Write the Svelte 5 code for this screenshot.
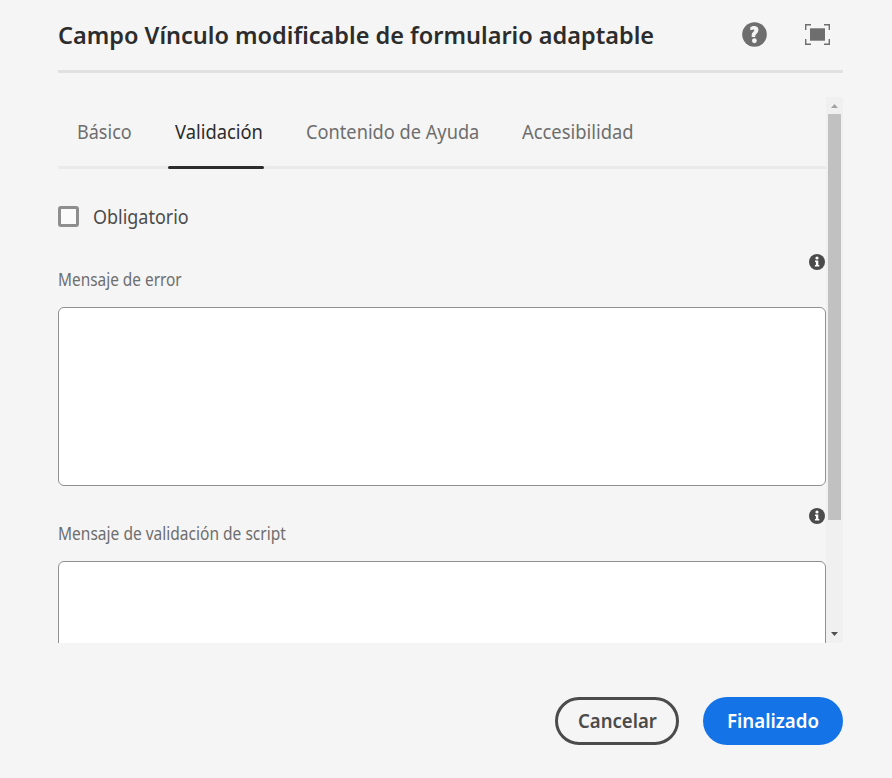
<script>
  const tabs = [
    { label: 'Básico', width: 55, gap: 19 },
    { label: 'Validación', width: 88, gap: 43, active: true },
    { label: 'Contenido de Ayuda', width: 173, gap: 43 },
    { label: 'Accesibilidad', width: 112, gap: 43 }
  ];
  const fields = [
    { label: 'Mensaje de error', width: 124 },
    { label: 'Mensaje de validación de script', width: 228 }
  ];

  // Condenses a line of text so that it spans the width of its box.
  function fit(node, width) {
    const apply = () => {
      node.style.transform = `scaleX(${width / node.offsetWidth})`;
    };
    apply();
    document.fonts.ready.then(apply);
  }
</script>

{#snippet line(text, width)}
  <span class="line" style="width:{width}px"><span class="glyphs" use:fit={width}>{text}</span></span>
{/snippet}

{#snippet info()}
  <svg class="info" width="16" height="16" viewBox="0 0 16 16" aria-hidden="true">
    <circle cx="8" cy="8" r="8" fill="#4b4b4b" />
    <circle cx="8" cy="4" r="1.6" fill="#fff" />
    <path d="M6 6.6h3.3v4.5h1v1.5H5.9v-1.5h1V8H6z" fill="#fff" />
  </svg>
{/snippet}

<div class="dialog">
  <header>
    <h1>{@render line('Campo Vínculo modificable de formulario adaptable', 596)}</h1>
    <div class="actions">
      <svg width="25" height="25" viewBox="0 0 24 24" aria-hidden="true">
        <circle cx="12" cy="12" r="11.8" fill="#6e6e6e" />
        <path d="M8.5 5.2C11.4 3.6 15.3 4.3 15.3 7.7c0 3-3 3.5-3 5.2v.9h-2.5v-1.5c0-2.4 2.5-2.7 2.5-4.4 0-1.6-2.2-1.5-3.8-.6z" fill="#f5f5f5" stroke="#f5f5f5" stroke-width="1" stroke-linejoin="round" />
        <circle cx="11.9" cy="18" r="2.3" fill="#f5f5f5" />
      </svg>
      <svg width="25" height="21" viewBox="0 0 25 21" aria-hidden="true">
        <rect x="5" y="4.3" width="15" height="12.4" fill="#6e6e6e" />
        <path d="M.7 6V.7H6M19 .7h5.3V6M24.3 15v5.3H19M6 20.3H.7V15" fill="none" stroke="#6e6e6e" stroke-width="1.4" />
      </svg>
    </div>
  </header>

  <div class="scroll">
    <div class="content">
      <nav>
        {#each tabs as tab}
          <div class="tab" class:active={tab.active} style="margin-left:{tab.gap}px">
            {@render line(tab.label, tab.width)}
          </div>
        {/each}
      </nav>
      <label class="check"><span class="box"></span>{@render line('Obligatorio', 96)}</label>
      {#each fields as field}
        <div class="field">
          {@render info()}
          <div class="caption">{@render line(field.label, field.width)}</div>
          <textarea aria-label={field.label}></textarea>
        </div>
      {/each}
    </div>
    <div class="bar">
      <svg width="7" height="4" viewBox="0 0 7 4"><path d="M0 4 3.5 0 7 4z" fill="#a3a3a3" /></svg>
      <div class="thumb"></div>
      <svg class="down" width="7" height="4" viewBox="0 0 7 4"><path d="M0 0h7L3.5 4z" fill="#505050" /></svg>
    </div>
  </div>

  <footer>
    <button class="cancel">{@render line('Cancelar', 79)}</button>
    <button class="done">{@render line('Finalizado', 92)}</button>
  </footer>
</div>

<style>
  :global(body) { background: #f5f5f5; }
  .dialog {
    box-sizing: border-box; width: 892px; height: 778px; padding: 0 49px 0 58px;
    background: #f5f5f5; color: #6e6e6e; overflow: hidden;
    font-family: 'Noto Sans', 'Open Sans', sans-serif; font-size: 20px; line-height: 24px;
    display: flex; flex-direction: column;
  }
  .line { display: block; white-space: nowrap; }
  .glyphs { display: inline-block; transform-origin: 0 50%; }
  header {
    box-sizing: border-box; height: 73px; border-bottom: 3px solid #e1e1e1; flex: none;
    display: flex; justify-content: space-between; padding-right: 13px;
  }
  h1 { margin: 0; padding-top: 19px; font-size: 24px; line-height: 32px; font-weight: 600; color: #2c2c2c; }
  .actions { display: flex; align-items: center; gap: 38px; height: 69px; }
  .scroll { margin-top: 24px; height: 546px; flex: none; display: flex; overflow: hidden; }
  .content { width: 768px; }
  nav { box-sizing: border-box; height: 72px; border-bottom: 3px solid #eaeaea; display: flex; }
  .tab { height: 72px; box-sizing: border-box; padding-top: 23px; }
  .active { color: #2c2c2c; position: relative; }
  .active::after {
    content: ''; position: absolute; left: -7.5px; right: -.5px; bottom: 0; height: 3px;
    border-radius: 1.5px; background: #2c2c2c;
  }
  .check { display: flex; align-items: flex-start; height: 24px; margin-top: 36px; color: #4b4b4b; gap: 14px; }
  .box { box-sizing: border-box; width: 21px; height: 21px; margin-top: 1px; border: 3px solid #8e8e8e; border-radius: 3px; background: #fafafa; }
  .field { height: 254px; display: flex; flex-direction: column; }
  .check + .field { margin-top: 24.5px; }
  .info { align-self: flex-end; flex: none; margin-right: 1px; }
  .caption { height: 24px; margin-top: -3px; font-size: 17.5px; }
  textarea {
    display: block; box-sizing: border-box; width: 768px; height: 179px; flex: none; margin: 16.5px 0 0;
    border: 1px solid #909090; border-radius: 6px; background: #fff; resize: none; outline: none;
  }
  .bar { width: 17px; background: #f0f0f0; display: flex; flex-direction: column; align-items: center; padding-top: 7px; box-sizing: border-box; }
  .bar svg { flex: none; }
  .thumb { width: 13px; height: 406px; margin-top: 6px; background: #c1c1c1; flex: none; }
  .bar .down { margin-top: auto; margin-bottom: 7px; }
  footer { display: flex; justify-content: flex-end; gap: 24px; margin-top: 54px; }
  button {
    box-sizing: border-box; height: 48px; border-radius: 24px; padding: 0; margin: 0;
    display: flex; align-items: center; justify-content: center; text-align: left;
    font: 600 19.5px/24px 'Noto Sans', 'Open Sans', sans-serif;
  }
  .cancel { width: 124px; border: 3px solid #4b4b4b; background: transparent; color: #4b4b4b; }
  .done { width: 140px; border: 0; background: #1473e6; color: #fff; }
</style>
